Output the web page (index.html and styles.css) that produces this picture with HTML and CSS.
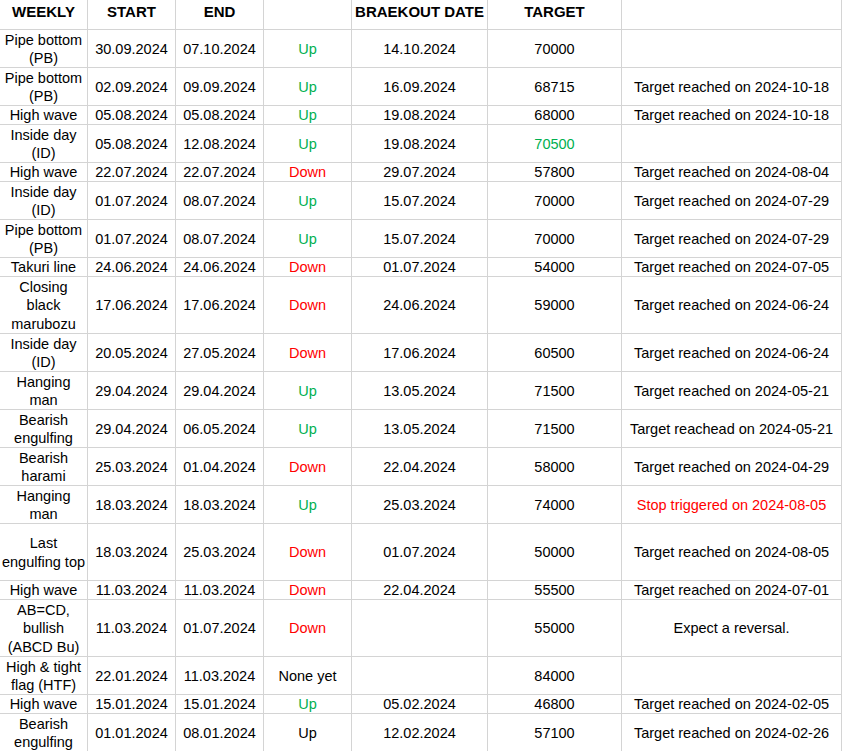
FILE: index.html
```html
<!DOCTYPE html>
<html>
<head>
<meta charset="utf-8">
<title>Weekly patterns</title>
<link rel="stylesheet" href="styles.css">
</head>
<body>
<div class="sheet">
  <div class="row head">
    <div class="cell">WEEKLY</div><div class="cell">START</div><div class="cell">END</div><div class="cell"></div><div class="cell">BRAEKOUT DATE</div><div class="cell">TARGET</div><div class="cell"></div>
  </div>
  <div class="row h2">
    <div class="cell">Pipe bottom<br>(PB)</div><div class="cell">30.09.2024</div><div class="cell">07.10.2024</div><div class="cell up">Up</div><div class="cell">14.10.2024</div><div class="cell">70000</div><div class="cell"></div>
  </div>
  <div class="row h2">
    <div class="cell">Pipe bottom<br>(PB)</div><div class="cell">02.09.2024</div><div class="cell">09.09.2024</div><div class="cell up">Up</div><div class="cell">16.09.2024</div><div class="cell">68715</div><div class="cell">Target reached on 2024-10-18</div>
  </div>
  <div class="row h1">
    <div class="cell">High wave</div><div class="cell">05.08.2024</div><div class="cell">05.08.2024</div><div class="cell up">Up</div><div class="cell">19.08.2024</div><div class="cell">68000</div><div class="cell">Target reached on 2024-10-18</div>
  </div>
  <div class="row h2">
    <div class="cell">Inside day<br>(ID)</div><div class="cell">05.08.2024</div><div class="cell">12.08.2024</div><div class="cell up">Up</div><div class="cell">19.08.2024</div><div class="cell up">70500</div><div class="cell"></div>
  </div>
  <div class="row h1">
    <div class="cell">High wave</div><div class="cell">22.07.2024</div><div class="cell">22.07.2024</div><div class="cell down">Down</div><div class="cell">29.07.2024</div><div class="cell">57800</div><div class="cell">Target reached on 2024-08-04</div>
  </div>
  <div class="row h2">
    <div class="cell">Inside day<br>(ID)</div><div class="cell">01.07.2024</div><div class="cell">08.07.2024</div><div class="cell up">Up</div><div class="cell">15.07.2024</div><div class="cell">70000</div><div class="cell">Target reached on 2024-07-29</div>
  </div>
  <div class="row h2">
    <div class="cell">Pipe bottom<br>(PB)</div><div class="cell">01.07.2024</div><div class="cell">08.07.2024</div><div class="cell up">Up</div><div class="cell">15.07.2024</div><div class="cell">70000</div><div class="cell">Target reached on 2024-07-29</div>
  </div>
  <div class="row h1">
    <div class="cell">Takuri line</div><div class="cell">24.06.2024</div><div class="cell">24.06.2024</div><div class="cell down">Down</div><div class="cell">01.07.2024</div><div class="cell">54000</div><div class="cell">Target reached on 2024-07-05</div>
  </div>
  <div class="row h3">
    <div class="cell">Closing<br>black<br>marubozu</div><div class="cell">17.06.2024</div><div class="cell">17.06.2024</div><div class="cell down">Down</div><div class="cell">24.06.2024</div><div class="cell">59000</div><div class="cell">Target reached on 2024-06-24</div>
  </div>
  <div class="row h2">
    <div class="cell">Inside day<br>(ID)</div><div class="cell">20.05.2024</div><div class="cell">27.05.2024</div><div class="cell down">Down</div><div class="cell">17.06.2024</div><div class="cell">60500</div><div class="cell">Target reached on 2024-06-24</div>
  </div>
  <div class="row h2">
    <div class="cell">Hanging<br>man</div><div class="cell">29.04.2024</div><div class="cell">29.04.2024</div><div class="cell up">Up</div><div class="cell">13.05.2024</div><div class="cell">71500</div><div class="cell">Target reached on 2024-05-21</div>
  </div>
  <div class="row h2">
    <div class="cell">Bearish<br>engulfing</div><div class="cell">29.04.2024</div><div class="cell">06.05.2024</div><div class="cell up">Up</div><div class="cell">13.05.2024</div><div class="cell">71500</div><div class="cell">Target reachead on 2024-05-21</div>
  </div>
  <div class="row h2">
    <div class="cell">Bearish<br>harami</div><div class="cell">25.03.2024</div><div class="cell">01.04.2024</div><div class="cell down">Down</div><div class="cell">22.04.2024</div><div class="cell">58000</div><div class="cell">Target reached on 2024-04-29</div>
  </div>
  <div class="row h2">
    <div class="cell">Hanging<br>man</div><div class="cell">18.03.2024</div><div class="cell">18.03.2024</div><div class="cell up">Up</div><div class="cell">25.03.2024</div><div class="cell">74000</div><div class="cell down">Stop triggered on 2024-08-05</div>
  </div>
  <div class="row h3">
    <div class="cell">Last<br>engulfing top</div><div class="cell">18.03.2024</div><div class="cell">25.03.2024</div><div class="cell down">Down</div><div class="cell">01.07.2024</div><div class="cell">50000</div><div class="cell">Target reached on 2024-08-05</div>
  </div>
  <div class="row h1">
    <div class="cell">High wave</div><div class="cell">11.03.2024</div><div class="cell">11.03.2024</div><div class="cell down">Down</div><div class="cell">22.04.2024</div><div class="cell">55500</div><div class="cell">Target reached on 2024-07-01</div>
  </div>
  <div class="row h3">
    <div class="cell">AB=CD,<br>bullish<br>(ABCD Bu)</div><div class="cell">11.03.2024</div><div class="cell">01.07.2024</div><div class="cell down">Down</div><div class="cell"></div><div class="cell">55000</div><div class="cell">Expect a reversal.</div>
  </div>
  <div class="row h2">
    <div class="cell">High &amp; tight<br>flag (HTF)</div><div class="cell">22.01.2024</div><div class="cell">11.03.2024</div><div class="cell">None yet</div><div class="cell"></div><div class="cell">84000</div><div class="cell"></div>
  </div>
  <div class="row h1">
    <div class="cell">High wave</div><div class="cell">15.01.2024</div><div class="cell">15.01.2024</div><div class="cell up">Up</div><div class="cell">05.02.2024</div><div class="cell">46800</div><div class="cell">Target reached on 2024-02-05</div>
  </div>
  <div class="row h2">
    <div class="cell">Bearish<br>engulfing</div><div class="cell">01.01.2024</div><div class="cell">08.01.2024</div><div class="cell">Up</div><div class="cell">12.02.2024</div><div class="cell">57100</div><div class="cell">Target reached on 2024-02-26</div>
  </div>
</div>
</body>
</html>
```
FILE: styles.css
```css
html, body {
  margin: 0;
  padding: 0;
  background: #ffffff;
}

.sheet {
  width: 842px;
  font-family: "Liberation Sans", Arial, sans-serif;
  font-size: 14.5px;
  line-height: 18.5px;
  color: #000000;
}

.row {
  display: grid;
  grid-template-columns: 88px 88px 88px 88px 136px 134px 220px;
}

.row.head { height: 30px; }
.row.h1 { height: 19px; }
.row.h2 { height: 38px; }
.row.h3 { height: 57px; }

.cell {
  box-sizing: border-box;
  padding-top: 1px;
  border-right: 1px solid #d4d4d4;
  border-bottom: 1px solid #d4d4d4;
  display: flex;
  align-items: center;
  justify-content: center;
  text-align: center;
  white-space: nowrap;
  overflow: hidden;
}

.head .cell {
  align-items: flex-start;
  padding-top: 3px;
  font-weight: bold;
  font-size: 15px;
  line-height: 18px;
}

.up { color: #00b050; }
.down { color: #ff0000; }
```
